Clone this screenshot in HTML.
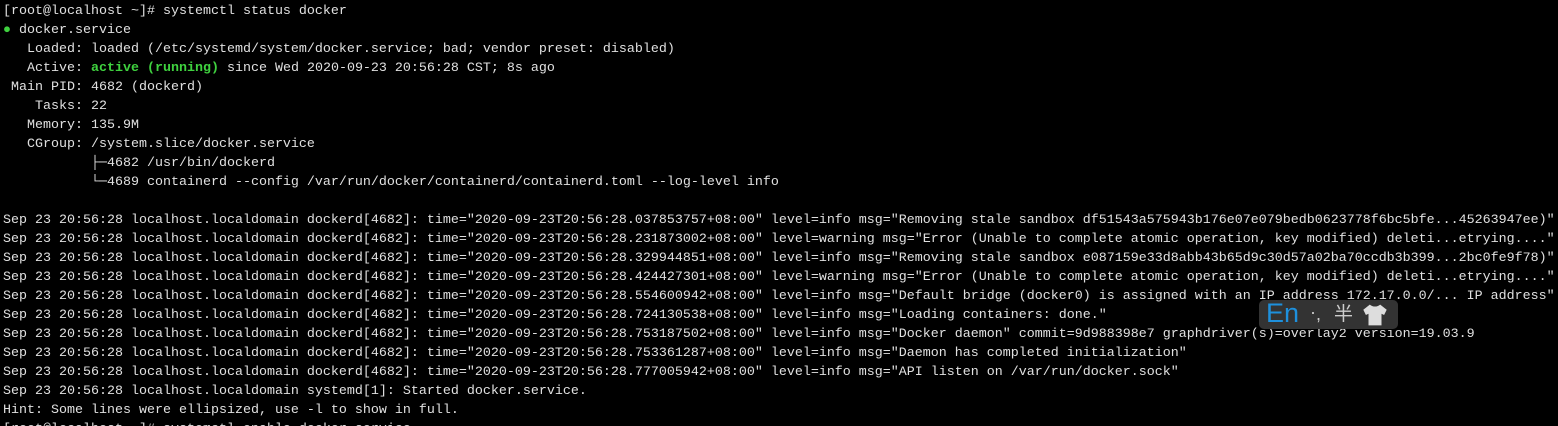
<!DOCTYPE html>
<html><head><meta charset="utf-8"><style>
html,body{margin:0;padding:0;background:#000;width:1558px;height:426px;overflow:hidden}
pre{margin:0;padding:2px 0 0 3px;font-family:"Liberation Mono",monospace;font-size:13.33px;line-height:19px;color:#e0e0e0;white-space:pre}
.g{color:#3fd13f;font-weight:bold}
.ime{position:absolute;left:1259px;top:300px;width:139px;height:29px;background:#333;border-radius:5px;font-family:"Liberation Sans","Noto Sans CJK SC",sans-serif}
.ime span{position:absolute;line-height:29px}
</style></head><body>
<pre>[root@localhost ~]# systemctl status docker
<span class="g" style="font-weight:normal">●</span> docker.service
   Loaded: loaded (/etc/systemd/system/docker.service; bad; vendor preset: disabled)
   Active: <span class="g">active (running)</span> since Wed 2020-09-23 20:56:28 CST; 8s ago
 Main PID: 4682 (dockerd)
    Tasks: 22
   Memory: 135.9M
   CGroup: /system.slice/docker.service
           ├─4682 /usr/bin/dockerd
           └─4689 containerd --config /var/run/docker/containerd/containerd.toml --log-level info

Sep 23 20:56:28 localhost.localdomain dockerd[4682]: time="2020-09-23T20:56:28.037853757+08:00" level=info msg="Removing stale sandbox df51543a575943b176e07e079bedb0623778f6bc5bfe...45263947ee)"
Sep 23 20:56:28 localhost.localdomain dockerd[4682]: time="2020-09-23T20:56:28.231873002+08:00" level=warning msg="Error (Unable to complete atomic operation, key modified) deleti...etrying...."
Sep 23 20:56:28 localhost.localdomain dockerd[4682]: time="2020-09-23T20:56:28.329944851+08:00" level=info msg="Removing stale sandbox e087159e33d8abb43b65d9c30d57a02ba70ccdb3b399...2bc0fe9f78)"
Sep 23 20:56:28 localhost.localdomain dockerd[4682]: time="2020-09-23T20:56:28.424427301+08:00" level=warning msg="Error (Unable to complete atomic operation, key modified) deleti...etrying...."
Sep 23 20:56:28 localhost.localdomain dockerd[4682]: time="2020-09-23T20:56:28.554600942+08:00" level=info msg="Default bridge (docker0) is assigned with an IP address 172.17.0.0/... IP address"
Sep 23 20:56:28 localhost.localdomain dockerd[4682]: time="2020-09-23T20:56:28.724130538+08:00" level=info msg="Loading containers: done."
Sep 23 20:56:28 localhost.localdomain dockerd[4682]: time="2020-09-23T20:56:28.753187502+08:00" level=info msg="Docker daemon" commit=9d988398e7 graphdriver(s)=overlay2 version=19.03.9
Sep 23 20:56:28 localhost.localdomain dockerd[4682]: time="2020-09-23T20:56:28.753361287+08:00" level=info msg="Daemon has completed initialization"
Sep 23 20:56:28 localhost.localdomain dockerd[4682]: time="2020-09-23T20:56:28.777005942+08:00" level=info msg="API listen on /var/run/docker.sock"
Sep 23 20:56:28 localhost.localdomain systemd[1]: Started docker.service.
Hint: Some lines were ellipsized, use -l to show in full.
[root@localhost ~]# systemctl enable docker.service</pre>
<div class="ime">
<span style="left:7px;top:-1px;font-size:27px;color:#1e90dc">En</span>
<span style="left:51px;top:-2px;font-size:18px;color:#ccc">·</span>
<span style="left:57px;top:0px;font-size:18px;color:#ccc">,</span>
<span style="left:75px;top:0px;font-size:19px;color:#ccc">半</span>
<span style="left:103px;top:0px"><svg width="26" height="24" viewBox="0 0 20 18" style="margin-top:3px"><path d="M6 1 L1 5 L3 9 L5 8 L5 17 L15 17 L15 8 L17 9 L19 5 L14 1 Q10 4 6 1Z" fill="#ddd"/></svg></span>
</div>
</body></html>
